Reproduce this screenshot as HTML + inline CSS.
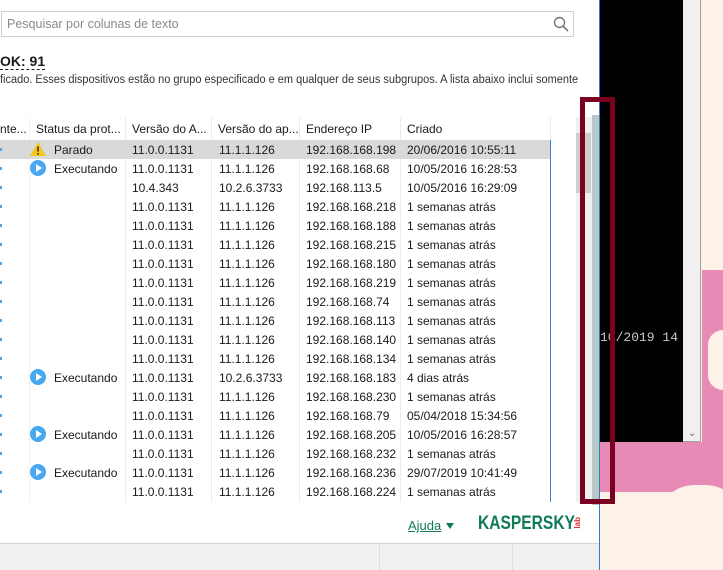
<!DOCTYPE html>
<html><head><meta charset="utf-8"><style>
*{margin:0;padding:0;box-sizing:border-box}
body{width:723px;height:570px;overflow:hidden;position:relative;background:#fcf2e8;font-family:"Liberation Sans","DejaVu Sans",sans-serif;font-size:12px;color:#1a1a1a}
.abs{position:absolute}
.win{left:0;top:0;width:600px;height:570px;background:#fff;border-right:1px solid #2b7fd4;overflow:hidden}
.search{left:1px;top:11px;width:573px;height:26px;border:1px solid #cfcfcf;color:#8a8a8a;padding:5px 5px;font-size:12.5px}
.row{position:absolute;left:0;width:550px;height:19px}
.c{position:absolute;top:3px;white-space:nowrap;font-size:12px}
.vl{position:absolute;top:117px;width:1px;height:385px;background:#ececec}
.hdr{position:absolute;top:117px;left:0;width:550px;height:23px}
.play{position:absolute;left:30px;top:1px;width:16px;height:16px;border-radius:50%;background:#47a8f0}
.play:after{content:"";position:absolute;left:6px;top:4px;border-left:6px solid #fff;border-top:4px solid transparent;border-bottom:4px solid transparent}
.dot{position:absolute;left:0;top:8px;width:2px;height:3px;background:#49a9ea}
</style></head><body>
<div class="abs win">
 <div class="abs search">Pesquisar por colunas de texto
  <svg class="abs" style="right:4px;top:4px" width="16" height="16" viewBox="0 0 16 16"><circle cx="6.5" cy="6.5" r="5" fill="none" stroke="#777" stroke-width="1.4"/><line x1="10" y1="10" x2="15" y2="15" stroke="#777" stroke-width="1.6"/></svg>
 </div>
 <div class="abs" style="left:0;top:53px;font-weight:bold;font-size:14px;border-bottom:1px dashed #222;line-height:16px">OK: 91</div>
 <div class="abs" style="left:0;top:74px;font-size:11.5px;color:#333;white-space:nowrap;transform:scaleX(0.955);transform-origin:left">ficado. Esses dispositivos estão no grupo especificado e em qualquer de seus subgrupos. A lista abaixo inclui somente</div>
 <div class="hdr">
  <div class="c" style="left:0;top:5px">nte...</div>
  <div class="c" style="left:36px;top:5px">Status da prot...</div>
  <div class="c" style="left:132px;top:5px">Versão do A...</div>
  <div class="c" style="left:218px;top:5px">Versão do ap...</div>
  <div class="c" style="left:306px;top:5px">Endereço IP</div>
  <div class="c" style="left:407px;top:5px">Criado</div>
 </div>
 <div class="vl" style="left:29px;background:#f2f2f2"></div>
 <div class="vl" style="left:125px"></div>
 <div class="vl" style="left:211px"></div>
 <div class="vl" style="left:299px"></div>
 <div class="vl" style="left:400px"></div>
 <div class="vl" style="left:550px;height:23px"></div>
 <div class="abs" style="left:550px;top:140px;width:1px;height:362px;background:#2b86e0"></div>
 <div id="rows"></div>
 <div class="abs" style="left:576px;top:117px;width:23px;height:385px;background:#f0f0f0"></div>
 <div class="abs" style="left:576px;top:133px;width:15px;height:60px;background:#cdcdcd"></div>
 <div class="abs" style="left:592px;top:115px;width:7px;height:390px;background:#b9c7c5"></div>
 <div class="abs" style="left:408px;top:518px;color:#127a5c;text-decoration:underline;font-size:13px">Ajuda</div>
 <div class="abs" style="left:446px;top:523px;border-top:6px solid #127a5c;border-left:4px solid transparent;border-right:4px solid transparent"></div>
 <div class="abs" style="left:478px;top:513px;color:#0d7a5a;font-weight:bold;font-size:19px;transform:scaleX(0.82);transform-origin:left;white-space:nowrap">KASPERSKY</div>
 <div class="abs" style="left:573px;top:517px;color:#e03030;font-size:8px;writing-mode:vertical-rl;transform:rotate(180deg);font-weight:bold">lab</div>
 <div class="abs" style="left:0;top:543px;width:599px;height:27px;background:#f0f0f0;border-top:1px solid #d4d4d4"></div>
 <div class="abs" style="left:379px;top:544px;width:1px;height:26px;background:#ddd"></div>
 <div class="abs" style="left:512px;top:544px;width:1px;height:26px;background:#ddd"></div>
</div>
<div class="abs" style="left:600px;top:0;width:83px;height:442px;background:#000"></div>
<div class="abs" style="left:600px;top:330px;color:#c8c8c8;font-family:'Liberation Mono',monospace;font-size:13px;white-space:nowrap">10/2019 14</div>
<div class="abs" style="left:683px;top:0;width:18px;height:442px;background:#f0f0f0;border-right:1px solid #a0a0a0;border-bottom:1px solid #a0a0a0"></div>
<div class="abs" style="left:688px;top:428px;color:#666;font-size:10px">&#8964;</div>
<div class="abs" style="left:600px;top:442px;width:123px;height:50px;background:#e88ab6"></div>
<div class="abs" style="left:702px;top:270px;width:21px;height:180px;background:#e88ab6"></div>
<div class="abs" style="left:708px;top:330px;width:15px;height:60px;border-radius:15px 0 0 15px;background:#fcf2e8"></div>
<div class="abs" style="left:655px;top:485px;width:90px;height:60px;border-radius:40px 40px 0 0;background:#fcf2e8"></div>
<div class="abs" style="left:600px;top:505px;width:123px;height:65px;background:#fcf2e8"></div>
<div class="abs" style="left:580px;top:97px;width:35px;height:407px;border:5px solid #7c0020"></div>
<script>
var d=[["w","Parado","11.0.0.1131","11.1.1.126","192.168.168.198","20/06/2016 10:55:11"],
["p","Executando","11.0.0.1131","11.1.1.126","192.168.168.68","10/05/2016 16:28:53"],
["","","10.4.343","10.2.6.3733","192.168.113.5","10/05/2016 16:29:09"],
["","","11.0.0.1131","11.1.1.126","192.168.168.218","1 semanas atrás"],
["","","11.0.0.1131","11.1.1.126","192.168.168.188","1 semanas atrás"],
["","","11.0.0.1131","11.1.1.126","192.168.168.215","1 semanas atrás"],
["","","11.0.0.1131","11.1.1.126","192.168.168.180","1 semanas atrás"],
["","","11.0.0.1131","11.1.1.126","192.168.168.219","1 semanas atrás"],
["","","11.0.0.1131","11.1.1.126","192.168.168.74","1 semanas atrás"],
["","","11.0.0.1131","11.1.1.126","192.168.168.113","1 semanas atrás"],
["","","11.0.0.1131","11.1.1.126","192.168.168.140","1 semanas atrás"],
["","","11.0.0.1131","11.1.1.126","192.168.168.134","1 semanas atrás"],
["p","Executando","11.0.0.1131","10.2.6.3733","192.168.168.183","4 dias atrás"],
["","","11.0.0.1131","11.1.1.126","192.168.168.230","1 semanas atrás"],
["","","11.0.0.1131","11.1.1.126","192.168.168.79","05/04/2018 15:34:56"],
["p","Executando","11.0.0.1131","11.1.1.126","192.168.168.205","10/05/2016 16:28:57"],
["","","11.0.0.1131","11.1.1.126","192.168.168.232","1 semanas atrás"],
["p","Executando","11.0.0.1131","11.1.1.126","192.168.168.236","29/07/2019 10:41:49"],
["","","11.0.0.1131","11.1.1.126","192.168.168.224","1 semanas atrás"]];
var h="";
d.forEach(function(r,i){
 var bg=i==0?"background:#d9d9d9;":"";
 h+='<div class="row" style="top:'+(140+i*19)+'px;'+bg+'"><div class="dot"></div>';
 if(r[0]=="p")h+='<div class="play"></div>';
 if(r[0]=="w")h+='<svg style="position:absolute;left:29px;top:1px" width="18" height="16" viewBox="0 0 18 16"><path d="M9 1 L17 15 L1 15 Z" fill="#f5c518"/><rect x="8.2" y="5.5" width="1.6" height="5" fill="#333"/><rect x="8.2" y="12" width="1.6" height="1.6" fill="#333"/></svg>';
 h+='<div class="c" style="left:54px">'+r[1]+'</div><div class="c" style="left:132px">'+r[2]+'</div><div class="c" style="left:219px">'+r[3]+'</div><div class="c" style="left:306px">'+r[4]+'</div><div class="c" style="left:407px">'+r[5]+'</div></div>';
});
document.getElementById("rows").innerHTML=h;
</script>
</body></html>
